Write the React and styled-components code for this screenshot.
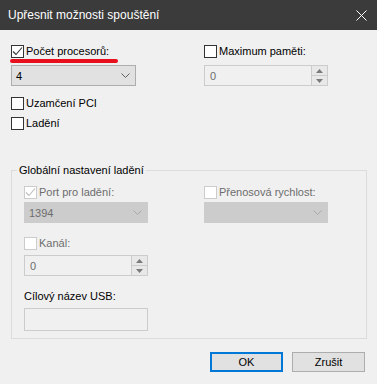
import React from "react";
import styled, { createGlobalStyle } from "styled-components";

const Global = createGlobalStyle`
  html, body { margin: 0; padding: 0; background: #f0f0f0; }
  * { box-sizing: border-box; }
`;

const Window = styled.div`
  width: 377px;
  height: 384px;
  background: #f0f0f0;
  font-family: "Liberation Sans", Arial, sans-serif;
  font-size: 11px;
  color: #000;
  display: flex;
  flex-direction: column;
  overflow: hidden;
`;

const TitleBar = styled.div`
  height: 30px;
  background: #3b3b3b;
  color: #fff;
  display: flex;
  align-items: center;
  justify-content: space-between;
  padding: 0 10px 0 8px;
  font-size: 12px;
  flex-shrink: 0;
`;

const TitleText = styled.span`
  line-height: 16px;
`;

const Body = styled.div`
  padding: 15px 11px 0 11px;
  display: flex;
  flex-direction: column;
`;

const TopGrid = styled.div`
  display: grid;
  grid-template-columns: 125px 124px;
  column-gap: 68px;
`;

const Column = styled.div`
  display: flex;
  flex-direction: column;
`;

const CheckRow = styled.label`
  position: relative;
  display: flex;
  align-items: center;
  height: 13px;
  margin-top: ${(p) => p.$mt || 0}px;
  color: ${(p) => (p.$disabled ? "#6d6d6d" : "#000")};
  white-space: nowrap;
`;

const Box = styled.span`
  width: 13px;
  height: 13px;
  flex-shrink: 0;
  border: 1px solid ${(p) => (p.$disabled ? "#cccccc" : "#333333")};
  background: #fff;
  display: flex;
  align-items: center;
  justify-content: center;
  margin-right: 2px;
`;

const LabelText = styled.span`
  line-height: 13px;
`;

const RedMark = styled.span`
  position: absolute;
  left: -1px;
  top: 14px;
  width: 108px;
  height: 4px;
  border-radius: 2px;
  background: #e8101c;
`;

const Select = styled.div`
  height: 21px;
  margin-top: ${(p) => p.$mt || 0}px;
  border: 1px solid ${(p) => (p.$disabled ? "#cccccc" : "#adadad")};
  background: ${(p) => (p.$disabled ? "#cccccc" : "#e1e1e1")};
  color: ${(p) => (p.$disabled ? "#6d6d6d" : "#000")};
  display: flex;
  align-items: center;
  justify-content: space-between;
  padding: 0 5px 0 4px;
`;

const Spin = styled.div`
  height: 21px;
  margin-top: ${(p) => p.$mt || 0}px;
  border: 1px solid #cccccc;
  background: #f0f0f0;
  display: flex;
  align-items: stretch;
`;

const SpinValue = styled.span`
  flex: 1;
  display: flex;
  align-items: center;
  padding-left: 5px;
  color: #6d6d6d;
`;

const SpinButtons = styled.div`
  width: 16px;
  display: flex;
  flex-direction: column;
  border-left: 1px solid #cccccc;
`;

const SpinButton = styled.div`
  flex: 1;
  display: flex;
  align-items: center;
  justify-content: center;
  background: #e8e8e8;
  border-bottom: ${(p) => (p.$top ? "1px solid #cccccc" : "none")};
`;

const TextBox = styled.div`
  height: 23px;
  margin-top: ${(p) => p.$mt || 0}px;
  border: 1px solid #cccccc;
  background: #f0f0f0;
`;

const PlainLabel = styled.div`
  margin-top: ${(p) => p.$mt || 0}px;
  line-height: 13px;
`;

const Group = styled.fieldset`
  margin: 33px 0 0 0;
  width: 356px;
  border: 1px solid #dcdcdc;
  padding: 9px 12px 7px 12px;
  min-width: 0;
`;

const Legend = styled.legend`
  margin-left: -7px;
  padding: 0 2px;
  line-height: 14px;
`;

const GroupGrid = styled.div`
  display: grid;
  grid-template-columns: 124px 124px;
  column-gap: 56px;
`;

const Buttons = styled.div`
  display: flex;
  justify-content: flex-end;
  gap: 9px;
  margin-top: 13px;
  padding-right: 1px;
`;

const Button = styled.div`
  width: 73px;
  height: 20px;
  display: flex;
  align-items: center;
  justify-content: center;
  background: #e1e1e1;
  border: ${(p) => (p.$default ? "2px solid #0078d7" : "1px solid #adadad")};
`;

const Check = ({ color }) => (
  <svg width="11" height="11" viewBox="0 0 11 11">
    <polyline points="1,5.5 4,8.5 10,1.5" fill="none" stroke={color} strokeWidth="1.1" />
  </svg>
);

const Chevron = ({ color }) => (
  <svg width="9" height="5" viewBox="0 0 9 5">
    <polyline points="0.5,0.5 4.5,4.5 8.5,0.5" fill="none" stroke={color} strokeWidth="1" />
  </svg>
);

const Arrow = ({ up }) => (
  <svg width="7" height="4" viewBox="0 0 7 4">
    <polygon points={up ? "0,4 7,4 3.5,0" : "0,0 7,0 3.5,4"} fill="#7a7a7a" />
  </svg>
);

const Checkbox = ({ checked, disabled, label, mt, children }) => (
  <CheckRow $mt={mt} $disabled={disabled}>
    <Box $disabled={disabled}>{checked && <Check color={disabled ? "#bcbcbc" : "#333"} />}</Box>
    <LabelText>{label}</LabelText>
    {children}
  </CheckRow>
);

const SpinBox = ({ value, mt }) => (
  <Spin $mt={mt}>
    <SpinValue>{value}</SpinValue>
    <SpinButtons>
      <SpinButton $top>
        <Arrow up />
      </SpinButton>
      <SpinButton>
        <Arrow />
      </SpinButton>
    </SpinButtons>
  </Spin>
);

export default function App() {
  return (
    <Window>
      <Global />
      <TitleBar>
        <TitleText>Upřesnit možnosti spouštění</TitleText>
        <svg width="11" height="11" viewBox="0 0 11 11">
          <path d="M0.5 0.5 L10.5 10.5 M10.5 0.5 L0.5 10.5" stroke="#fff" strokeWidth="1" />
        </svg>
      </TitleBar>
      <Body>
        <TopGrid>
          <Column>
            <Checkbox checked label="Počet procesorů:">
              <RedMark />
            </Checkbox>
            <Select $mt={7}>
              <span>4</span>
              <Chevron color="#606060" />
            </Select>
            <Checkbox label="Uzamčení PCI" mt={11} />
            <Checkbox label="Ladění" mt={7} />
          </Column>
          <Column>
            <Checkbox label="Maximum paměti:" />
            <SpinBox value="0" mt={7} />
          </Column>
        </TopGrid>
        <Group>
          <Legend>Globální nastavení ladění</Legend>
          <GroupGrid>
            <Column>
              <Checkbox checked disabled label="Port pro ladění:" />
              <Select $mt={3} $disabled>
                <span>1394</span>
                <Chevron color="#a8a8a8" />
              </Select>
              <Checkbox disabled label="Kanál:" mt={14} />
              <SpinBox value="0" mt={5} />
              <PlainLabel $mt={14}>Cílový název USB:</PlainLabel>
              <TextBox $mt={5} />
            </Column>
            <Column>
              <Checkbox disabled label="Přenosová rychlost:" />
              <Select $mt={3} $disabled>
                <span />
                <Chevron color="#a8a8a8" />
              </Select>
            </Column>
          </GroupGrid>
        </Group>
        <Buttons>
          <Button $default>OK</Button>
          <Button>Zrušit</Button>
        </Buttons>
      </Body>
    </Window>
  );
}
